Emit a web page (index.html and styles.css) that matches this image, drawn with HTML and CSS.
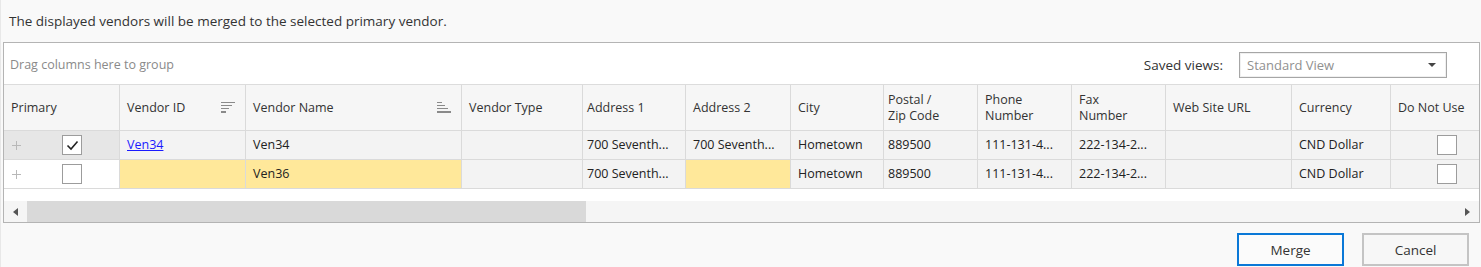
FILE: index.html
```html
<!DOCTYPE html>
<html lang="en">
<head>
    <meta charset="UTF-8">
    <title>Merge Vendors</title>
    <link rel="stylesheet" href="styles.css">
</head>
<body>
    <p class="message">The displayed vendors will be merged to the selected primary vendor.</p>

    <div class="grid">
        <div class="group-panel">
            <span class="group-hint">Drag columns here to group</span>
            <span class="views-label">Saved views:</span>
            <div class="combo">
                <span>Standard View</span>
                <span class="combo-arrow"></span>
            </div>
        </div>

        <div class="table">
            <div class="hcell">Primary</div>
            <div class="hcell sortable">Vendor ID
                <svg class="sort-icon" width="15" height="12" viewBox="0 0 15 12"><g fill="#8a8a8a"><rect x="0" y="0" width="14" height="1"/><rect x="0" y="3" width="11" height="1"/><rect x="0" y="6" width="8" height="1"/><rect x="0" y="9" width="5" height="2"/></g></svg>
            </div>
            <div class="hcell sortable">Vendor Name
                <svg class="sort-icon" width="15" height="12" viewBox="0 0 15 12"><g fill="#8a8a8a"><rect x="0" y="0" width="5" height="1"/><rect x="0" y="3" width="8" height="1"/><rect x="0" y="6" width="11" height="1"/><rect x="0" y="9" width="14" height="2"/></g></svg>
            </div>
            <div class="hcell">Vendor Type</div>
            <div class="hcell tight">Address 1</div>
            <div class="hcell">Address 2</div>
            <div class="hcell">City</div>
            <div class="hcell tight">Postal /<br>Zip Code</div>
            <div class="hcell">Phone<br>Number</div>
            <div class="hcell">Fax<br>Number</div>
            <div class="hcell">Web Site URL</div>
            <div class="hcell">Currency</div>
            <div class="hcell last">Do Not Use</div>

            <!-- row 1 (focused) -->
            <div class="cell primary focused">
                <span class="plus"></span>
                <span class="check checked">
                    <svg width="13" height="11" viewBox="0 0 13 11"><path d="M1.5 5.5 L5 9 L11.5 1.5" fill="none" stroke="#222" stroke-width="1.6"/></svg>
                </span>
            </div>
            <div class="cell"><a href="#" class="link">Ven34</a></div>
            <div class="cell">Ven34</div>
            <div class="cell"></div>
            <div class="cell tight">700 Seventh...</div>
            <div class="cell">700 Seventh...</div>
            <div class="cell">Hometown</div>
            <div class="cell tight">889500</div>
            <div class="cell">111-131-4...</div>
            <div class="cell">222-134-2...</div>
            <div class="cell"></div>
            <div class="cell">CND Dollar</div>
            <div class="cell last center"><span class="check"></span></div>

            <!-- row 2 -->
            <div class="cell primary">
                <span class="plus"></span>
                <span class="check"></span>
            </div>
            <div class="cell diff"></div>
            <div class="cell diff">Ven36</div>
            <div class="cell"></div>
            <div class="cell tight">700 Seventh...</div>
            <div class="cell diff"></div>
            <div class="cell">Hometown</div>
            <div class="cell tight">889500</div>
            <div class="cell">111-131-4...</div>
            <div class="cell">222-134-2...</div>
            <div class="cell"></div>
            <div class="cell">CND Dollar</div>
            <div class="cell last center"><span class="check"></span></div>
        </div>

        <div class="filler"></div>

        <div class="hscroll">
            <span class="arrow-left"></span>
            <div class="track"><div class="thumb"></div></div>
            <span class="arrow-right"></span>
        </div>
    </div>

    <div class="buttons">
        <button class="btn btn-default">Merge</button>
        <button class="btn">Cancel</button>
    </div>
</body>
</html>
```

FILE: styles.css
```css
body {
    margin: 0;
    height: 267px;
    background-color: #f9f9f9;
    border-left: 1px solid #e8e8e8;
    font-family: "Open Sans", "Noto Sans", sans-serif;
    font-size: 12.5px;
    color: #333;
    overflow: hidden;
}
.message {
    margin: 0;
    height: 42px;
    padding-left: 8px;
    line-height: 42px;
    font-size: 13.5px;
    color: #333;
}
.grid {
    margin-left: 2px;
    width: 1475px;
    border: 1px solid #b4b4b4;
    background-color: #fff;
}
.group-panel {
    height: 41px;
    box-sizing: border-box;
    padding-top: 2px;
    display: flex;
    align-items: center;
    padding-left: 6px;
    padding-right: 32px;
}
.group-hint {
    color: #8a8a8a;
    flex: 1;
}
.views-label {
    margin-right: 16px;
    font-size: 13.5px;
}
.combo {
    width: 189px;
    height: 24px;
    border: 1px solid #a6a6a6;
    box-shadow: inset 0 0 0 1px #f0f0f0;
    display: flex;
    align-items: center;
    justify-content: space-between;
    padding: 0 10px 0 7px;
    box-sizing: content-box;
    color: #909090;
    font-size: 13px;
}
.combo-arrow {
    width: 0;
    height: 0;
    border-left: 4px solid transparent;
    border-right: 4px solid transparent;
    border-top: 4px solid #444;
}
.table {
    display: grid;
    grid-template-columns: 116px 126px 216px 121px 103px 105px 93px 94px 94px 94px 126px 99px 88px;
    grid-template-rows: 46px 29px 29px;
    border-top: 1px solid #dcdcdc;
}
.hcell, .cell {
    box-sizing: border-box;
    border-right: 1px solid #dadada;
    border-bottom: 1px solid #dadada;
    padding-left: 7px;
    display: flex;
    align-items: center;
    white-space: nowrap;
    overflow: hidden;
}
.hcell {
    background-color: #f6f6f6;
    line-height: 16px;
    padding-top: 1px;
}
.hcell.sortable {
    justify-content: space-between;
    padding-right: 9px;
}
.sort-icon {
    flex-shrink: 0;
}
.tight {
    padding-left: 4px;
}
.last {
    border-right: none;
}
.cell {
    background-color: #f3f3f3;
    color: #222;
    padding-bottom: 1px;
}
.cell.primary {
    background-color: #fff;
    padding-left: 8px;
    padding-bottom: 0;
}
.cell.primary.focused {
    background-color: #e6e6e6;
}
.cell.diff {
    background-color: #ffe89a;
}
.cell.center {
    justify-content: flex-end;
    padding-right: 22px;
    padding-bottom: 0;
}
.plus {
    position: relative;
    width: 9px;
    height: 9px;
    margin-right: 41px;
}
.plus::before, .plus::after {
    content: "";
    position: absolute;
    background-color: #b8b8b8;
}
.plus::before {
    left: 0;
    top: 4px;
    width: 9px;
    height: 1px;
}
.plus::after {
    left: 4px;
    top: 0;
    width: 1px;
    height: 9px;
}
.check {
    width: 20px;
    height: 20px;
    box-sizing: border-box;
    border: 1px solid #9c9c9c;
    background-color: #fff;
    display: flex;
    align-items: center;
    justify-content: center;
}
.link {
    color: #1a1aff;
    text-decoration: underline;
}
.filler {
    height: 12px;
}
.hscroll {
    height: 21px;
    display: flex;
    align-items: center;
    background-color: #f5f5f5;
}
.arrow-left, .arrow-right {
    width: 23px;
    height: 21px;
    display: flex;
    align-items: center;
    justify-content: center;
    flex-shrink: 0;
}
.arrow-left::before {
    content: "";
    border-top: 4px solid transparent;
    border-bottom: 4px solid transparent;
    border-right: 5px solid #555;
}
.arrow-right::before {
    content: "";
    border-top: 4px solid transparent;
    border-bottom: 4px solid transparent;
    border-left: 5px solid #555;
}
.track {
    flex: 1;
    height: 21px;
}
.thumb {
    width: 559px;
    height: 21px;
    background-color: #d9d9d9;
}
.buttons {
    display: flex;
    justify-content: flex-end;
    gap: 18px;
    padding-right: 12px;
    margin-top: 10px;
}
.btn {
    width: 107px;
    height: 33px;
    border: 2px solid #c4c4c4;
    background-color: #f7f7f7;
    font-family: "Open Sans", "Noto Sans", sans-serif;
    font-size: 13.5px;
    color: #333;
    padding: 0;
}
.btn-default {
    border-color: #0a78d7;
    background-color: #fbfbfb;
}
```
